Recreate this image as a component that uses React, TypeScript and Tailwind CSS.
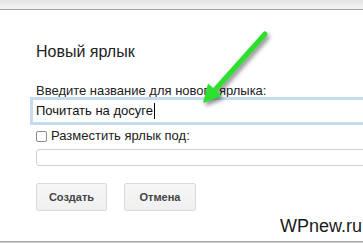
import React from "react";

export default function App() {
  return (
    <div
      className="relative w-[363px] h-[244px] overflow-hidden bg-white text-[#222]"
      style={{ fontFamily: '"Liberation Sans", Arial, sans-serif' }}
    >
      <div className="h-[10px] bg-gradient-to-b from-[#e4e4e4] to-[#f4f4f4] border-b border-[#a3a3a3]" />
      <div className="flex flex-col pl-[36px]">
        <div className="mt-[32px] text-[16px] leading-[20px]">Новый ярлык</div>
        <div className="mt-[22px] text-[13px] leading-[13px]">Введите название для нового ярлыка:</div>
        <div className="ml-[-6px] mt-0 h-[28px] w-[340px] border-[3px] border-[#c6daf0] bg-white flex items-center pl-[3px]">
          <span className="text-[13px] leading-[16px] text-[#111]">Почитать на досуге</span>
          <span className="ml-[1px] w-[1px] h-[16px] bg-black" />
        </div>
        <div className="mt-[3px] h-[16px] flex items-center gap-[4px]">
          <div className="w-[11px] h-[11px] border border-[#8c8c8c] rounded-[2px] bg-white" />
          <span className="text-[13px] leading-[16px]">Разместить ярлык под:</span>
        </div>
        <div className="mt-[5px] h-[17px] w-[340px] border border-[#cfcfcf] rounded-[3px] bg-white" />
        <div className="mt-[17px] flex gap-[17px]">
          <div className="w-[71px] h-[28px] flex items-center justify-center border border-[#dadada] rounded-[2px] bg-gradient-to-b from-[#f6f6f6] to-[#f0f0f0] text-[11px] font-bold text-[#444]">
            Создать
          </div>
          <div className="w-[72px] h-[28px] flex items-center justify-center border border-[#dadada] rounded-[2px] bg-gradient-to-b from-[#f6f6f6] to-[#f0f0f0] text-[11px] font-bold text-[#444]">
            Отмена
          </div>
        </div>
      </div>
      <div className="mt-[5px] flex justify-end pr-[1px] text-[18px] leading-[20px] text-[#1a1a1a]">WPnew.ru</div>
      <div className="mt-[5px] h-[2px] bg-[#a8a8a8] border-b border-[#cfcfcf]" />
      <svg
        className="absolute inset-0 pointer-events-none"
        width="363"
        height="244"
        viewBox="0 0 363 244"
        style={{ filter: "drop-shadow(2px 3px 2px rgba(0,0,0,0.45))" }}
      >
        <line x1="265" y1="34" x2="214" y2="91" stroke="#2ee02e" strokeWidth="5" strokeLinecap="round" />
        <polygon points="203,103 208,83.5 222,96" fill="#2ee02e" />
      </svg>
    </div>
  );
}
